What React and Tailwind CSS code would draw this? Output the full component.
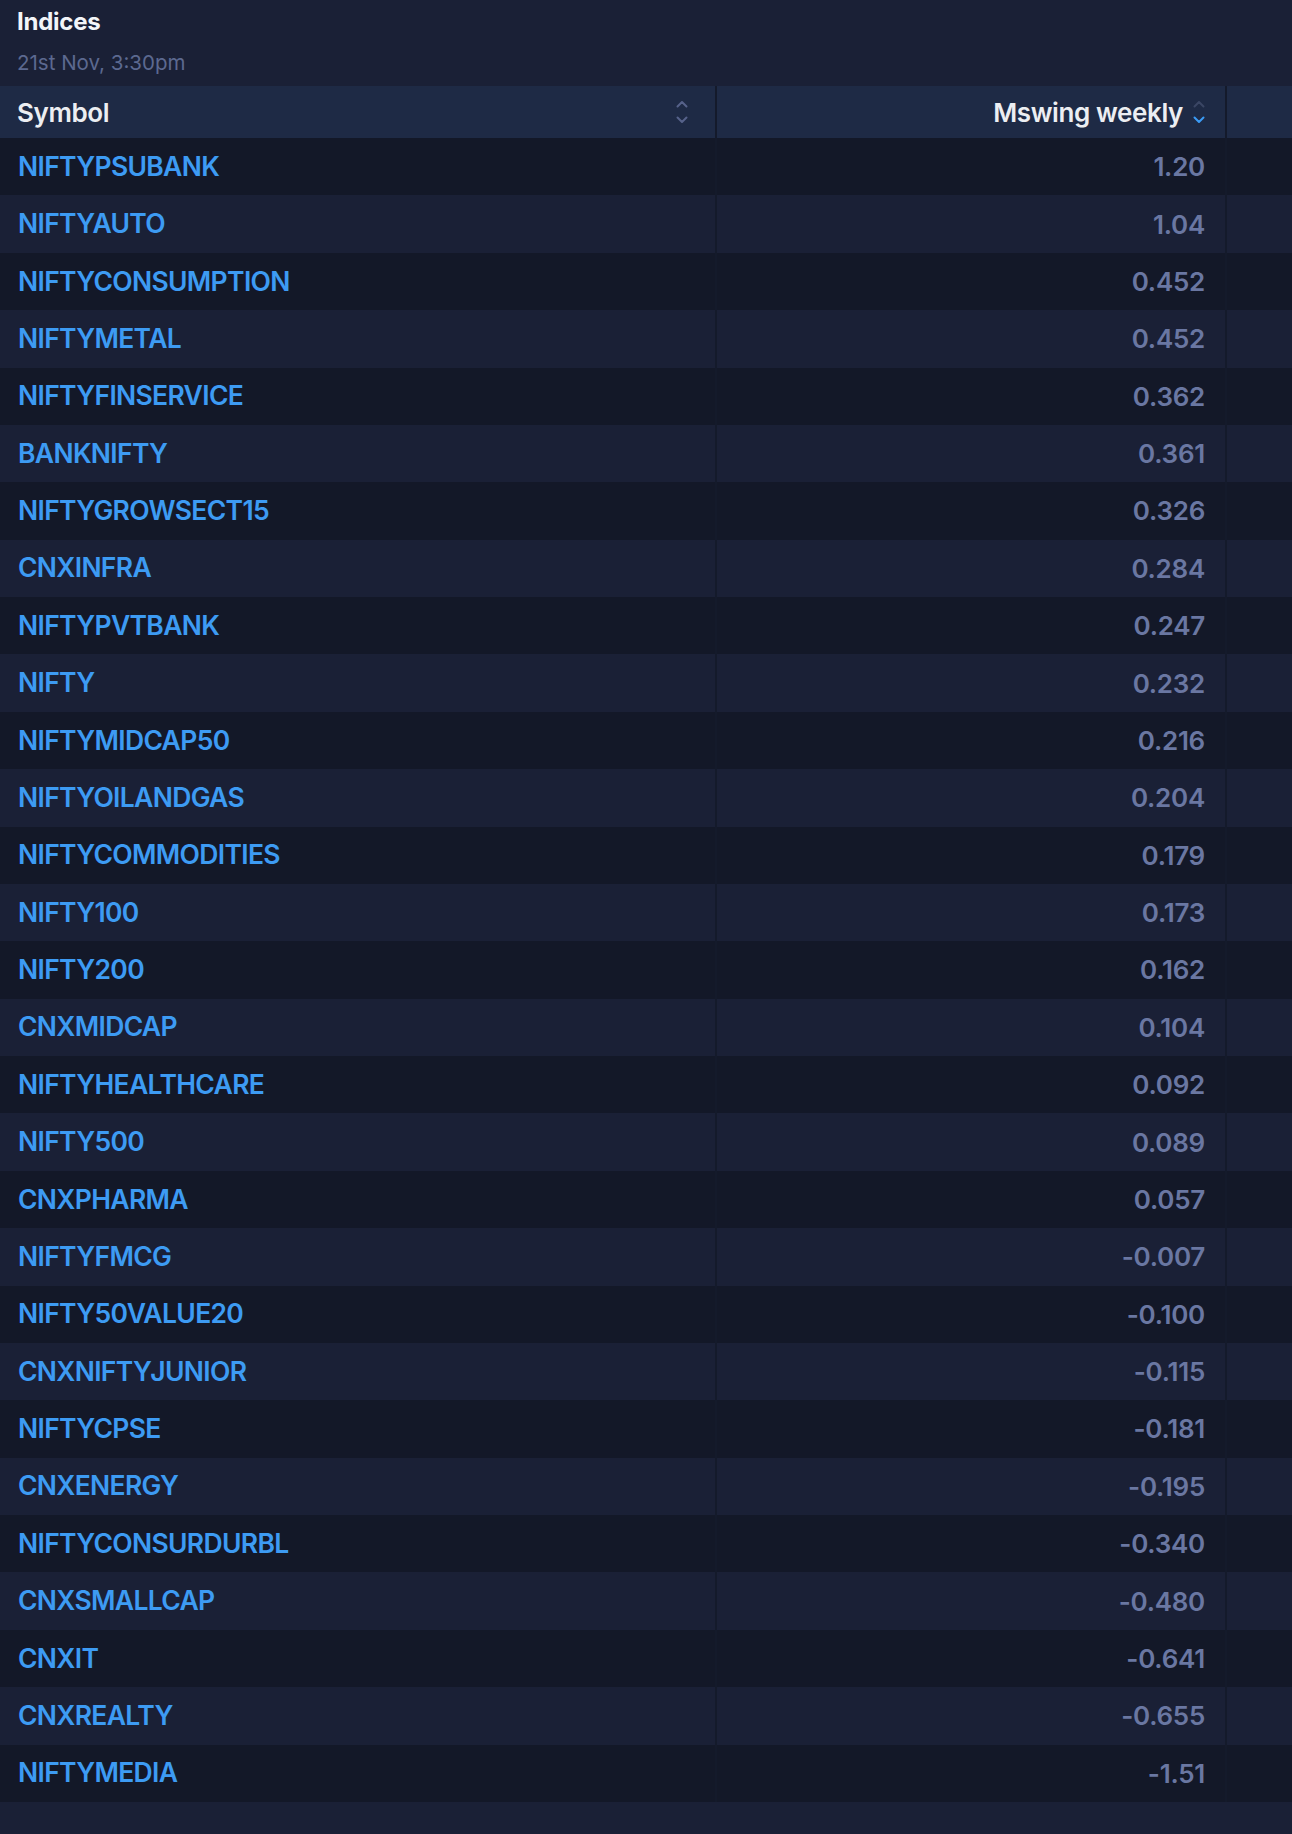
import React from "react";

const rows = [
  ["NIFTYPSUBANK", "1.20"],
  ["NIFTYAUTO", "1.04"],
  ["NIFTYCONSUMPTION", "0.452"],
  ["NIFTYMETAL", "0.452"],
  ["NIFTYFINSERVICE", "0.362"],
  ["BANKNIFTY", "0.361"],
  ["NIFTYGROWSECT15", "0.326"],
  ["CNXINFRA", "0.284"],
  ["NIFTYPVTBANK", "0.247"],
  ["NIFTY", "0.232"],
  ["NIFTYMIDCAP50", "0.216"],
  ["NIFTYOILANDGAS", "0.204"],
  ["NIFTYCOMMODITIES", "0.179"],
  ["NIFTY100", "0.173"],
  ["NIFTY200", "0.162"],
  ["CNXMIDCAP", "0.104"],
  ["NIFTYHEALTHCARE", "0.092"],
  ["NIFTY500", "0.089"],
  ["CNXPHARMA", "0.057"],
  ["NIFTYFMCG", "-0.007"],
  ["NIFTY50VALUE20", "-0.100"],
  ["CNXNIFTYJUNIOR", "-0.115"],
  ["NIFTYCPSE", "-0.181"],
  ["CNXENERGY", "-0.195"],
  ["NIFTYCONSURDURBL", "-0.340"],
  ["CNXSMALLCAP", "-0.480"],
  ["CNXIT", "-0.641"],
  ["CNXREALTY", "-0.655"],
  ["NIFTYMEDIA", "-1.51"],
];

function SortIcon({ up, down }) {
  return (
    <svg width="12" height="24" viewBox="0 0 12 24" fill="none" strokeWidth="2" strokeLinecap="round" strokeLinejoin="round">
      <path d="M1.5 6.5 L6 2 L10.5 6.5" stroke={up} />
      <path d="M1.5 17.5 L6 22 L10.5 17.5" stroke={down} />
    </svg>
  );
}

export default function App() {
  return (
    <div className="w-[1292px] min-h-[1834px] bg-[#1a2036] font-['Inter',_'Noto_Sans',_sans-serif]">
      <div className="h-[86px] px-[17px] pt-[6px]">
        <div className="text-[24px] leading-[32px] font-bold tracking-[-0.01em] text-[#f3f5f9]">Indices</div>
        <div className="mt-[11px] text-[20.5px] leading-[28px] text-[#5c6990]">21st Nov, 3:30pm</div>
      </div>
      <div className="grid grid-cols-[717px_510px_65px]">
        <div className="h-[52px] bg-[#1e2a45] border-r-2 border-[#141a2b] flex items-center justify-between pl-[17px] pr-[27px]">
          <span className="text-[26px] font-semibold tracking-[-0.015em] text-[#eceef2]">Symbol</span>
          <SortIcon up="#56628a" down="#56628a" />
        </div>
        <div className="h-[52px] bg-[#1e2a45] border-r-2 border-[#141a2b] flex items-center justify-end gap-[10px] pr-[20px]">
          <span className="text-[26px] font-semibold tracking-[-0.015em] text-[#eceef2]">Mswing weekly</span>
          <SortIcon up="#3a4664" down="#3b9bf5" />
        </div>
        <div className="h-[52px] bg-[#1e2a45]"></div>
        {rows.map(([sym, val], i) => {
          const bg = i % 2 === 0 ? "bg-[#131828]" : "bg-[#1a2036]";
          return (
            <React.Fragment key={sym}>
              <div className={`h-[57.38px] ${bg} border-r-2 border-[#141a2b] flex items-center pl-[18px]`}>
                <span className="text-[26.5px] font-semibold tracking-[-0.025em] text-[#3d9bf3]">{sym}</span>
              </div>
              <div className={`h-[57.38px] ${bg} border-r-2 border-[#141a2b] flex items-center justify-end pr-[20px]`}>
                <span className="text-[26px] font-semibold tracking-[-0.01em] text-[#6a77a2]">{val}</span>
              </div>
              <div className={`h-[57.38px] ${bg}`}></div>
            </React.Fragment>
          );
        })}
      </div>
    </div>
  );
}
